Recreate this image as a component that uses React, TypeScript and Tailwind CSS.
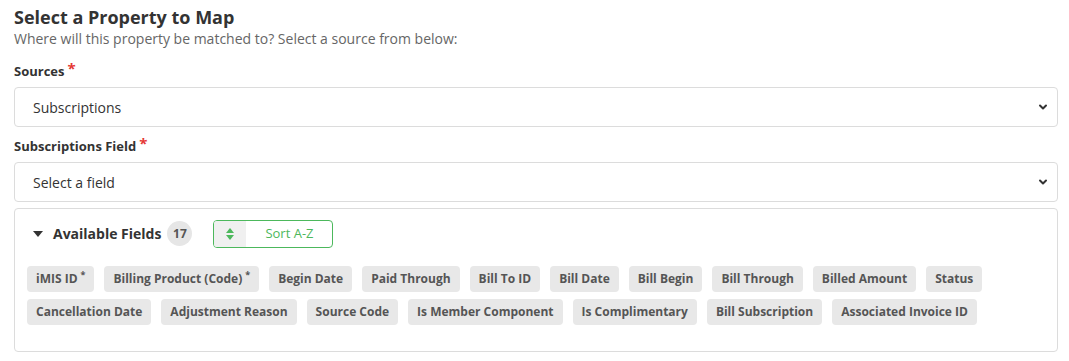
import { ChevronDown } from "lucide-react";

const fields: { name: string; required?: boolean }[] = [
  { name: "iMIS ID", required: true },
  { name: "Billing Product (Code)", required: true },
  { name: "Begin Date" },
  { name: "Paid Through" },
  { name: "Bill To ID" },
  { name: "Bill Date" },
  { name: "Bill Begin" },
  { name: "Bill Through" },
  { name: "Billed Amount" },
  { name: "Status" },
  { name: "Cancellation Date" },
  { name: "Adjustment Reason" },
  { name: "Source Code" },
  { name: "Is Member Component" },
  { name: "Is Complimentary" },
  { name: "Bill Subscription" },
  { name: "Associated Invoice ID" },
];

function Label({ text }: { text: string }) {
  return (
    <div className="flex items-start text-[13px] font-bold text-[#333] leading-[18px]">
      {text}
      <span className="ml-[3px] text-[#e53935] text-[15px] leading-[12px]">*</span>
    </div>
  );
}

function FakeSelect({ value }: { value: string }) {
  return (
    <div className="mt-[7px] h-[40px] w-full rounded-[4px] border border-[#dcdcdc] bg-white flex items-center justify-between pl-[18px] pr-[8px] text-[14px] text-[#333]">
      <span>{value}</span>
      <ChevronDown size={12} strokeWidth={4} className="text-[#333]" />
    </div>
  );
}

export default function App() {
  return (
    <div className="w-[1069px] h-[361px] bg-white font-['Open_Sans',sans-serif] pl-[14px] pr-[11px] pt-[5px]">
      <h1 className="text-[18px] font-bold text-[#333] leading-[24px]">Select a Property to Map</h1>
      <p className="text-[14px] text-[#666] leading-[20px]">
        Where will this property be matched to? Select a source from below:
      </p>

      <div className="mt-[13px]">
        <Label text="Sources" />
        <FakeSelect value="Subscriptions" />
      </div>

      <div className="mt-[10px]">
        <Label text="Subscriptions Field" />
        <FakeSelect value="Select a field" />
      </div>

      <div className="mt-[6px] rounded-[4px] border border-[#dcdcdc] pt-[11px] pb-[26px] pl-[12px] pr-[12px]">
        <div className="flex items-center pl-[6px] h-[27px]">
          <svg width="10" height="6" viewBox="0 0 10 6" className="mr-[10px]">
            <path d="M0 0 L10 0 L5 6 Z" fill="#333" />
          </svg>
          <span className="text-[14px] font-bold text-[#333]">Available Fields</span>
          <span className="ml-[6px] w-[25px] h-[25px] rounded-full bg-[#e6e6e6] flex items-center justify-center text-[12px] font-bold text-[#555]">
            17
          </span>
          <button className="ml-[21px] h-[28px] w-[120px] rounded-[4px] border border-[#4cb85c] flex overflow-hidden">
            <span className="w-[32px] h-full bg-[#f0f0f0] flex items-center justify-center">
              <svg width="8" height="12" viewBox="0 0 8 12">
                <path d="M4 0 L8 5 L0 5 Z" fill="#4cb85c" />
                <path d="M4 12 L8 7 L0 7 Z" fill="#4cb85c" />
              </svg>
            </span>
            <span className="flex-1 h-full flex items-center justify-center text-[13px] text-[#4cb85c]">
              Sort A-Z
            </span>
          </button>
        </div>

        <div className="mt-[19px] flex flex-wrap gap-x-[10px] gap-y-[7px]">
          {fields.map((f) => (
            <span
              key={f.name}
              className="h-[26px] px-[9px] rounded-[4px] bg-[#e8e8e8] flex items-center text-[12px] font-bold text-[#555]"
            >
              {f.name}
              {f.required && <span className="ml-[3px] self-start mt-[4px] text-[9px] leading-[9px]">*</span>}
            </span>
          ))}
        </div>
      </div>
    </div>
  );
}
